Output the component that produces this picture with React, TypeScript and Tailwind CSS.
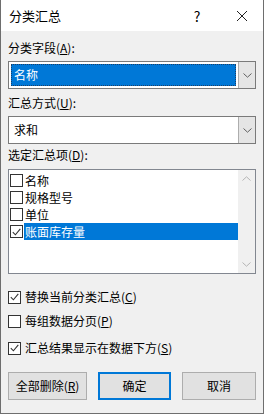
import { useState } from 'react'

const font = { fontFamily: '"Microsoft YaHei UI", "Noto Sans CJK SC", "Noto Sans", sans-serif' }

const CheckIcon = () => (
    <svg width="9" height="8" viewBox="0 0 9 8" className="block">
        <path d="M0.8 4.2 L3.4 6.8 L8.3 0.8" fill="none" stroke="#333" strokeWidth="1.1" />
    </svg>
)

const Box = ({ checked }: { checked: boolean }) => (
    <span className="flex h-[13px] w-[13px] shrink-0 items-center justify-center border border-[#333] bg-white">
        {checked && <CheckIcon />}
    </span>
)

const Chevron = ({ up, color = '#606060' }: { up?: boolean; color?: string }) => (
    <svg width="9" height="5" viewBox="0 0 9 5" className="block">
        <path
            d={up ? 'M0.5 4.5 L4.5 0.8 L8.5 4.5' : 'M0.5 0.5 L4.5 4.2 L8.5 0.5'}
            fill="none"
            stroke={color}
            strokeWidth="1"
        />
    </svg>
)

const Combo = ({ value, selected }: { value: string; selected?: boolean }) => (
    <div className="flex h-[28px] border border-[#7a7a7a] bg-white">
        <div className="flex flex-1 items-center p-[2px]">
            <div
                className={
                    selected
                        ? 'flex h-full w-full items-center border border-dotted border-[#1c3f66] bg-[#0078d7] pl-[2px] text-white'
                        : 'flex h-full w-full items-center pl-[3px] text-black'
                }
            >
                {value}
            </div>
        </div>
        <div className="flex w-[17px] items-center justify-center border-l border-[#adadad] bg-[#e5e5e5]">
            <Chevron />
        </div>
    </div>
)

export default function App() {
    const [items, setItems] = useState([
        { label: '名称', checked: false },
        { label: '规格型号', checked: false },
        { label: '单位', checked: false },
        { label: '账面库存量', checked: true },
    ])
    const [opts, setOpts] = useState([
        { label: '替换当前分类汇总', key: 'C', checked: true },
        { label: '每组数据分页', key: 'P', checked: false },
        { label: '汇总结果显示在数据下方', key: 'S', checked: true },
    ])

    return (
        <div
            className="flex h-[414px] w-[264px] flex-col border border-t-0 border-[#6e6e6e] bg-[#f0f0f0] text-[12px] leading-[16px] text-black"
            style={font}
        >
            <div className="flex h-[31px] shrink-0 items-center bg-white pl-[8px] text-[13px]">
                <span className="flex-1">分类汇总</span>
                <span className="w-[12px] text-center text-[14px]">?</span>
                <span className="ml-[32px] mr-[14px] flex w-[14px] justify-center">
                    <svg width="12" height="12" viewBox="0 0 12 12">
                        <path d="M1 1 L11 11 M11 1 L1 11" stroke="#222" strokeWidth="1" />
                    </svg>
                </span>
            </div>

            <div className="flex flex-1 flex-col px-[7px]">
                <div className="mt-[9px] h-[16px]">
                    分类字段(<span className="underline">A</span>):
                </div>
                <div className="mt-[5px]">
                    <Combo value="名称" selected />
                </div>

                <div className="mt-[6px] h-[16px]">
                    汇总方式(<span className="underline">U</span>):
                </div>
                <div className="mt-[5px]">
                    <Combo value="求和" />
                </div>

                <div className="mt-[3px] h-[16px]">
                    选定汇总项(<span className="underline">D</span>):
                </div>
                <div className="mt-[6px] flex h-[105px] border border-[#828790] bg-white">
                    <div className="flex-1 pt-[2px]">
                        {items.map((it, i) => (
                            <div
                                key={it.label}
                                className="flex h-[17px] cursor-default items-center pl-[1px]"
                                onClick={() =>
                                    setItems(items.map((x, j) => (j === i ? { ...x, checked: !x.checked } : x)))
                                }
                            >
                                <Box checked={it.checked} />
                                <span
                                    className={
                                        it.checked
                                            ? 'ml-[1px] flex h-full flex-1 items-center bg-[#0078d7] pl-[1px] text-white'
                                            : 'ml-[1px] flex h-full flex-1 items-center pl-[1px]'
                                    }
                                >
                                    {it.label}
                                </span>
                            </div>
                        ))}
                    </div>
                    <div className="flex w-[17px] flex-col items-center justify-between bg-[#f0f0f0] py-[6px]">
                        <Chevron up color="#b4b4b4" />
                        <Chevron color="#b4b4b4" />
                    </div>
                </div>

                <div className="mt-[15px] flex flex-col">
                    {opts.map((o, i) => (
                        <label
                            key={o.key}
                            className={
                                i === 0
                                    ? 'flex h-[16px] items-center gap-[4px]'
                                    : i === 1
                                      ? 'mt-[8px] flex h-[16px] items-center gap-[4px]'
                                      : 'mt-[11px] flex h-[16px] items-center gap-[4px]'
                            }
                            onClick={() =>
                                setOpts(opts.map((x, j) => (j === i ? { ...x, checked: !x.checked } : x)))
                            }
                        >
                            <Box checked={o.checked} />
                            <span>
                                {o.label}(<span className="underline">{o.key}</span>)
                            </span>
                        </label>
                    ))}
                </div>

                <div className="mt-[16px] flex gap-[11px]">
                    <button className="h-[28px] w-[79px] border border-[#adadad] bg-[#e1e1e1]">
                        全部删除(<span className="underline">R</span>)
                    </button>
                    <button className="h-[28px] w-[73px] border-2 border-[#0078d7] bg-[#e1e1e1]">确定</button>
                    <button className="h-[28px] w-[74px] border border-[#adadad] bg-[#e1e1e1]">取消</button>
                </div>
            </div>
        </div>
    )
}
